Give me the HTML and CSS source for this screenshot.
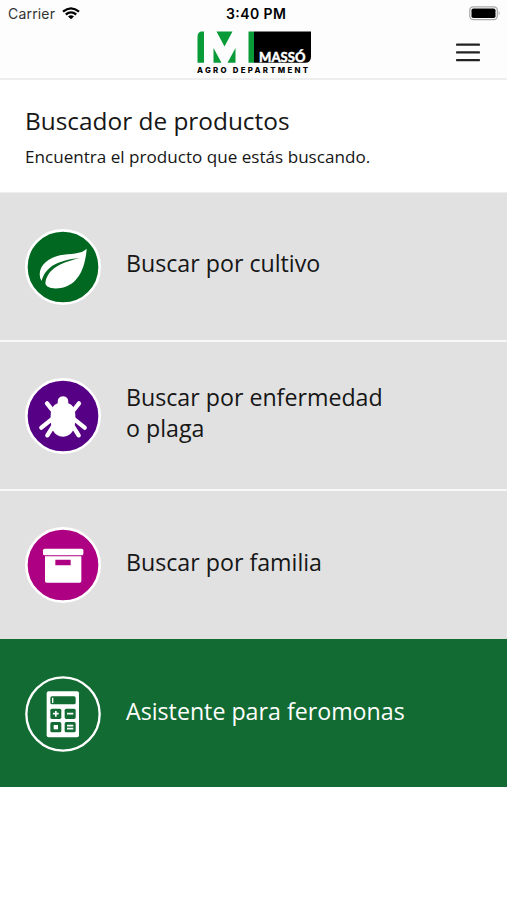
FILE: index.html
```html
<!DOCTYPE html>
<html lang="es">
<head>
  <meta charset="UTF-8">
  <title>Buscador de productos</title>
  <link rel="stylesheet" href="styles.css">
</head>
<body>

  <header class="header">
    <div class="status">
      <div class="carrier">
        <svg class="texto-carrier" width="48" height="20"><text x="0" y="15" textLength="47">Carrier</text></svg>
        <svg width="18" height="13" viewBox="0 0 18 13" fill="none" stroke="#000" stroke-width="2.3">
          <path d="M1 4.7Q9-2 17 4.7M3.8 7.5Q9 3.3 14.2 7.5"/>
          <path d="M6 9.4Q9 7.2 12 9.4L9 12.3z" fill="#000" stroke="none"/>
        </svg>
      </div>
      <svg class="hora" width="62" height="20"><text x="2" y="15" textLength="60">3:40 PM</text></svg>
      <svg class="bateria" width="32" height="15" viewBox="0 0 32 15">
        <rect x=".8" y=".8" width="27.5" height="12.8" rx="3.5" fill="#fff" stroke="#aaa" stroke-width="1.3"/>
        <rect x="2.5" y="2.5" width="24" height="9.5" rx="1.8"/>
        <path d="M29.8 5v4.5q1.8-2.2 0-4.5z" fill="#777"/>
      </svg>
    </div>
    <div class="barra">
      <svg class="logo" width="116" height="44" viewBox="0 0 116 44">
        <path d="M6 1.500H8V32.700H1.500V7Q1.500 1.500 6 1.500zM20.500 1.500H36.500L28.500 16.500zM17.500 18L25.500 32.700H17.500zM39.500 18V32.700H31.500zM52.500 1.500H58V32.700H52.500z" fill="#099b37"/>
        <path d="M58 1.500h57v25.200q0 6-6 6H58z"/>
        <text class="logo-nombre" x="63" y="31.700" textLength="46.500" lengthAdjust="spacing">MASSÓ</text>
        <text class="logo-depto" x="1" y="43.300" textLength="111" lengthAdjust="spacing">AGRO DEPARTMENT</text>
      </svg>
      <svg class="menu" width="24" height="20" viewBox="0 0 24 20" stroke="#222" stroke-width="2.200" stroke-linecap="round">
        <path d="M1 1.700h22M1 9.400h22M1 17.100h22"/>
      </svg>
    </div>
  </header>

  <section class="intro">
    <h1>Buscador de productos</h1>
    <p>Encuentra el producto que estás buscando.</p>
  </section>

  <nav class="lista">
    <a class="opcion">
      <svg class="icono" viewBox="0 0 228 228">
        <circle cx="114" cy="114" r="110" fill="#006821" stroke="#fff" stroke-width="8"/>
        <path d="M185 59C170 76 135 73 105 79C70 87 45 107 44 136Q44 149 50 156C61 116 94 94 165 87C110 100 66 119 61 163C64 178 87 181 112 176C160 166 181 116 185 59z" fill="#fff"/>
      </svg>
      <span>Buscar por cultivo</span>
    </a>
    <a class="opcion">
      <svg class="icono" viewBox="0 0 228 228">
        <circle cx="114" cy="114" r="110" fill="#560086" stroke="#fff" stroke-width="8"/>
        <path d="M98 76Q96 56 114 55Q132 56 130 76Q150 82 151 111C153 150 142 176 114 176S75 150 77 111Q78 82 98 76z" fill="#fff"/>
        <path d="M66 76L84 99M162 76L144 99M49 149L80 124M179 149L148 124M67 172L84 145M161 172L144 145" fill="none" stroke="#fff" stroke-width="13" stroke-linecap="round"/>
      </svg>
      <span>Buscar por enfermedad<br>o plaga</span>
    </a>
    <a class="opcion">
      <svg class="icono" viewBox="0 0 228 228">
        <circle cx="114" cy="114" r="110" fill="#ae0083" stroke="#fff" stroke-width="8"/>
        <rect x="54" y="65" width="121" height="20" rx="5" fill="#fff"/>
        <path d="M60 88H169V162Q169 167 164 167H65Q60 167 60 162zM91 98V115H137V98z" fill="#fff" fill-rule="evenodd"/>
      </svg>
      <span>Buscar por familia</span>
    </a>
    <a class="opcion feromonas">
      <svg class="icono" viewBox="0 0 228 228">
        <circle cx="114" cy="114" r="110" fill="none" stroke="#fff" stroke-width="7"/>
        <rect x="65" y="46" width="97" height="138" rx="6" fill="#fff"/>
        <g fill="#126b32">
          <rect x="76" y="61" width="76" height="24" rx="5"/>
          <rect x="76" y="98" width="33" height="31" rx="5"/>
          <rect x="119" y="98" width="33" height="31" rx="5"/>
          <rect x="76" y="138" width="33" height="31" rx="5"/>
          <rect x="119" y="138" width="33" height="31" rx="5"/>
        </g>
        <path d="M83 65V81" stroke="#fff" stroke-width="4"/>
        <path d="M84 113H101M92.500 105V122M126 113H145M126 149H145M126 158H145" stroke="#fff" stroke-width="5"/>
        <rect x="86" y="147" width="13" height="13" fill="#fff"/>
      </svg>
      <span>Asistente para feromonas</span>
    </a>
  </nav>

</body>
</html>
```
FILE: styles.css
```css
body {
  margin: 0;
  background: #fff;
  color: #161616;
  font-family: "Open Sans", sans-serif;
}

.header {
  height: 78px;
  background: #fdfdfd;
  border-bottom: 2px solid #eee;
}

.status {
  display: grid;
  grid-template-columns: 1fr 62px 1fr;
  height: 28px;
  padding: 0 6px 0 8px;
  font-family: Inter, sans-serif;
  font-size: 14px;
}

.status svg {
  display: block;
}

.carrier {
  display: flex;
  gap: 6px;
}

.carrier svg {
  margin-top: 7px;
}

.carrier .texto-carrier,
.hora {
  margin-top: 4px;
}

.texto-carrier {
  fill: #333;
}

.hora {
  font-weight: 600;
}

.bateria {
  justify-self: end;
  margin-top: 6px;
}

.barra {
  display: grid;
  grid-template-columns: 1fr 116px 1fr;
  align-items: start;
  padding: 2px 27px 0 28px;
}

.logo {
  grid-column: 2;
}

.logo-nombre {
  fill: #fff;
  stroke: #fff;
  stroke-width: 0.4px;
  font-family: Lato, sans-serif;
  font-size: 13px;
  font-weight: 900;
}

.logo-depto {
  font-family: Inter, sans-serif;
  font-size: 7.8px;
  font-weight: 800;
}

.menu {
  justify-self: end;
  margin-top: 13px;
}

.intro {
  height: 87px;
  padding: 25px 25px 0;
  border-bottom: 1px solid #eee;
}

.intro h1 {
  margin: 0;
  font-size: 24.4px;
  font-weight: 400;
  line-height: 32px;
}

.intro p {
  margin: 8px 0 0;
  font-size: 17.1px;
  line-height: 24px;
}

.opcion {
  display: flex;
  align-items: center;
  gap: 25px;
  box-sizing: border-box;
  height: 149px;
  padding-left: 25px;
  background: #e1e1e1;
  border-bottom: 2px solid #f8f8f8;
  font-size: 23.2px;
  line-height: 31.5px;
}

.opcion span {
  padding-bottom: 5px;
}

.icono {
  width: 76px;
  height: 76px;
}

.opcion:nth-child(3) {
  height: 148px;
  border-bottom: none;
}

.feromonas {
  height: 148px;
  padding-top: 2px;
  background: #126b32;
  border-bottom: none;
  color: #fff;
}
```
